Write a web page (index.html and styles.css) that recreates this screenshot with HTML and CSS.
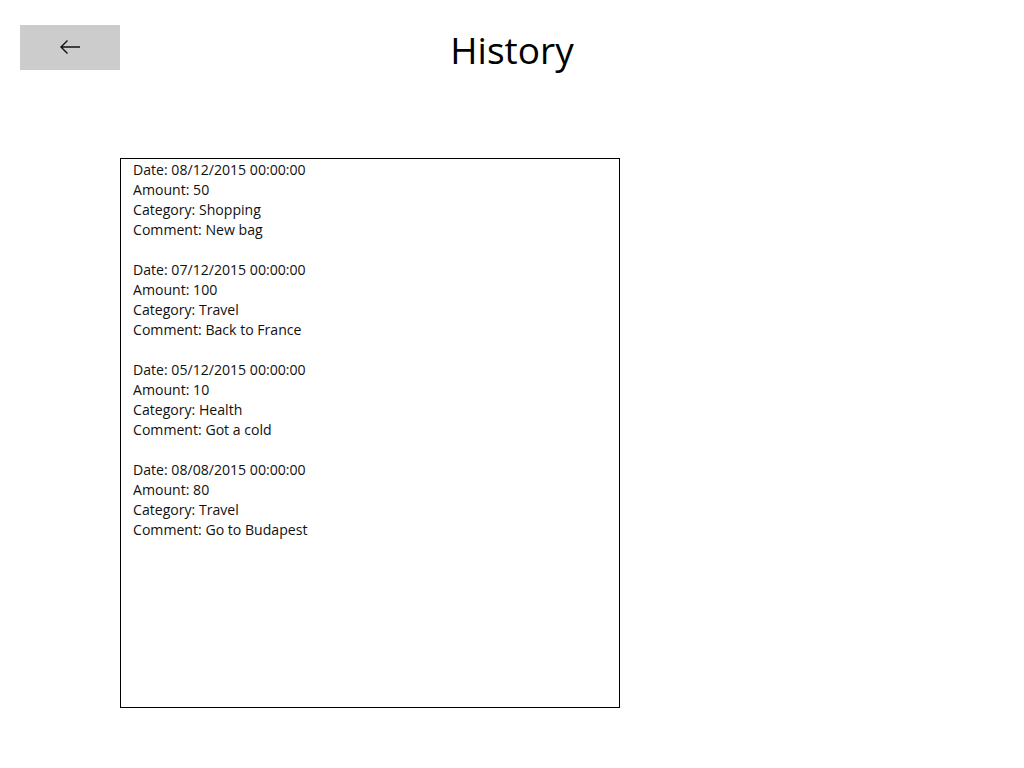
FILE: index.html
```html
<!DOCTYPE html>
<html>
<head>
<meta charset="utf-8">
<link rel="stylesheet" href="styles.css">
</head>
<body>
<div class="page">
  <header class="header">
    <button class="back" aria-label="Back">
      <svg width="22" height="16" viewBox="0 0 22 16"><path d="M21 8H2M8.5 1.5L2 8l6.5 6.5" fill="none" stroke="#111" stroke-width="1.4"/></svg>
    </button>
    <h1 class="title">History</h1>
    <div></div>
  </header>
  <div class="list">
    <div class="entry">
      <div>Date: 08/12/2015 00:00:00</div>
      <div>Amount: 50</div>
      <div>Category: Shopping</div>
      <div>Comment: New bag</div>
    </div>
    <div class="entry">
      <div>Date: 07/12/2015 00:00:00</div>
      <div>Amount: 100</div>
      <div>Category: Travel</div>
      <div>Comment: Back to France</div>
    </div>
    <div class="entry">
      <div>Date: 05/12/2015 00:00:00</div>
      <div>Amount: 10</div>
      <div>Category: Health</div>
      <div>Comment: Got a cold</div>
    </div>
    <div class="entry">
      <div>Date: 08/08/2015 00:00:00</div>
      <div>Amount: 80</div>
      <div>Category: Travel</div>
      <div>Comment: Go to Budapest</div>
    </div>
  </div>
</div>
</body>
</html>
```
FILE: styles.css
```css
html, body {
  margin: 0;
  padding: 0;
  background: #fff;
}
body {
  font-family: "Open Sans", "Noto Sans", sans-serif;
  color: #000;
}
.header {
  display: grid;
  grid-template-columns: 1fr auto 1fr;
  align-items: start;
  height: 158px;
}
.back {
  justify-self: start;
  margin: 25px 0 0 20px;
  width: 100px;
  height: 45px;
  background: #cccccc;
  border: none;
  padding: 0 0 2px 0;
  display: flex;
  align-items: center;
  justify-content: center;
}
.title {
  margin: 25px 0 0 0;
  font-weight: 400;
  font-size: 37px;
  line-height: 50px;
}
.list {
  margin-left: 120px;
  border: 1px solid #000;
  padding: 1px 0 0 12px;
  box-sizing: content-box;
  font-size: 14.1px;
  line-height: 20px;
  width: 486px;
  height: 547px;
  color: #111;
}
.entry {
  margin-bottom: 20px;
}
```
